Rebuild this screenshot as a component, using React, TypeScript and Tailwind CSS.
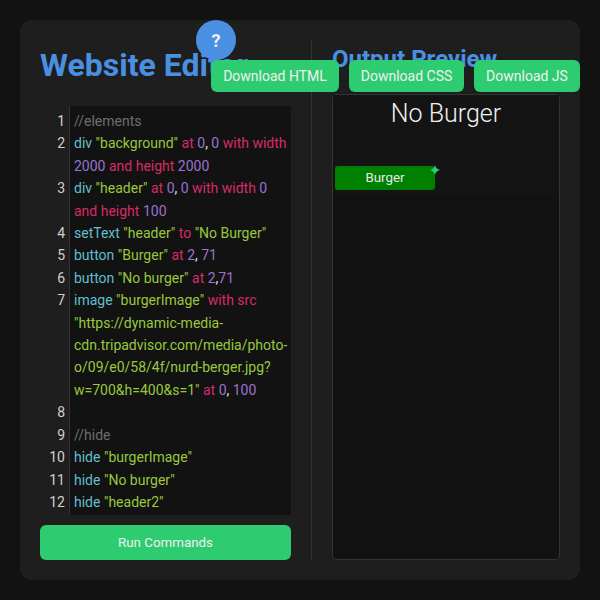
const kw = "text-[#61bfd0]";
const str = "text-[#98c83c]";
const pink = "text-[#d62c68]";
const num = "text-[#9a72d0]";
const cm = "text-[#6e6e6e]";
const pl = "text-[#e0e0e0]";

type Tok = [string, string];

const lines: Tok[][] = [
  [["//elements", cm]],
  [
    ["div", kw],
    [" ", pl],
    ['"background"', str],
    [" at ", pink],
    ["0", num],
    [", ", pl],
    ["0", num],
    [" with width ", pink],
    ["2000", num],
    [" and height ", pink],
    ["2000", num],
  ],
  [
    ["div", kw],
    [" ", pl],
    ['"header"', str],
    [" at ", pink],
    ["0", num],
    [", ", pl],
    ["0", num],
    [" with width ", pink],
    ["0", num],
    [" and height ", pink],
    ["100", num],
  ],
  [
    ["setText", kw],
    [" ", pl],
    ['"header"', str],
    [" to ", pink],
    ['"No Burger"', str],
  ],
  [
    ["button", kw],
    [" ", pl],
    ['"Burger"', str],
    [" at ", pink],
    ["2", num],
    [", ", pl],
    ["71", num],
  ],
  [
    ["button", kw],
    [" ", pl],
    ['"No burger"', str],
    [" at ", pink],
    ["2", num],
    [",", pl],
    ["71", num],
  ],
  [
    ["image", kw],
    [" ", pl],
    ['"burgerImage"', str],
    [" with src ", pink],
    [
      '"https://dynamic-media-cdn.tripadvisor.com/media/photo-o/09/e0/58/4f/nurd-berger.jpg?w=700&h=400&s=1"',
      str,
    ],
    [" at ", pink],
    ["0", num],
    [", ", pl],
    ["100", num],
  ],
  [],
  [["//hide", cm]],
  [
    ["hide", kw],
    [" ", pl],
    ['"burgerImage"', str],
  ],
  [
    ["hide", kw],
    [" ", pl],
    ['"No burger"', str],
  ],
  [
    ["hide", kw],
    [" ", pl],
    ['"header2"', str],
  ],
];

const downloads = [
  { label: "Download HTML", width: "w-[128px]" },
  { label: "Download CSS", width: "w-[115px]" },
  { label: "Download JS", width: "w-[106px]" },
];

function Sparkle() {
  return (
    <svg
      className="absolute right-[-5px] top-[-1px]"
      width="10"
      height="10"
      viewBox="0 0 12 12"
    >
      <path
        d="M6 0 C6.8 3.4 8.6 5.2 12 6 C8.6 6.8 6.8 8.6 6 12 C5.2 8.6 3.4 6.8 0 6 C3.4 5.2 5.2 3.4 6 0 Z"
        fill="#2ecc71"
      />
    </svg>
  );
}

export default function App() {
  return (
    <div className="relative h-[600px] w-[600px] overflow-hidden bg-[#121212] p-5 font-['Roboto',sans-serif] text-white">
      {/* help */}
      <button className="absolute left-[196px] top-5 flex h-10 w-10 items-center justify-center rounded-full bg-[#4a90e2] text-[18px] font-bold text-[#f0f0f0]">
        ?
      </button>

      {/* download buttons */}
      <div className="absolute right-5 top-[60px] flex gap-2.5">
        {downloads.map((d) => (
          <button
            key={d.label}
            className={`${d.width} h-8 rounded-md bg-[#2ecc71] text-center text-sm text-[#f0f0f0]`}
          >
            {d.label}
          </button>
        ))}
      </div>

      <div className="flex h-[560px] rounded-xl bg-[#1e1e1e] p-5">
        {/* Editor */}
        <div className="flex w-[272px] flex-col border-r border-[#333] pr-5">
          <h2 className="mb-[22px] mt-[6px] h-[38px] text-[32px] font-bold leading-[38px] text-[#4a90e2]">
            Website Editor
          </h2>
          <div className="h-[409px] bg-[linear-gradient(to_right,#1e1e1e_29px,#333_29px,#333_30px,#121212_30px)] py-1">
            {lines.map((line, i) => (
              <div key={i} className="flex text-sm leading-[22.4px]">
                <div className="w-[30px] shrink-0 pr-[5px] text-right text-[#d0d0d0]">
                  {i + 1}
                </div>
                <div className="min-w-0 flex-1 pl-1">
                  {line.map(([text, color], j) => (
                    <span key={j} className={color}>
                      {text}
                    </span>
                  ))}
                </div>
              </div>
            ))}
          </div>
          <button className="mt-2.5 h-[35px] w-full rounded-md bg-[#2ecc71] text-[13.33px] text-[#f0f0f0]">
            Run Commands
          </button>
        </div>

        {/* Preview */}
        <div className="flex flex-1 flex-col pl-5">
          <h2 className="mb-[21px] mt-[5px] h-[28px] text-2xl font-bold leading-[28px] text-[#4a90e2]">
            Output Preview
          </h2>
          <div className="flex-1 rounded border border-[#333] bg-[#121212]">
            <div className="h-[99px] bg-[#141414]">
              <div className="pt-[3px] text-center text-[25px] font-light leading-[32px] text-[#f0f0f0]">
                No Burger
              </div>
              <button className="relative ml-[2px] mt-[36px] h-6 w-[100px] rounded-[3px] bg-[#008000] text-[13.33px] text-[#e8e8e8]">
                Burger
                <Sparkle />
              </button>
            </div>
          </div>
        </div>
      </div>
    </div>
  );
}
